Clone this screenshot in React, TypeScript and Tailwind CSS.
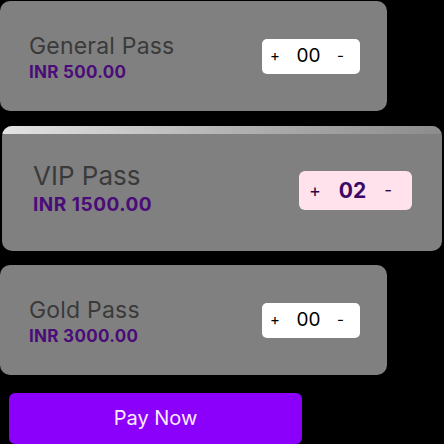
import React from 'react';

type Pass = { name: string; price: string; qty: string };

const passes: Pass[] = [
  { name: 'General Pass', price: 'INR 500.00', qty: '00' },
  { name: 'VIP Pass', price: 'INR 1500.00', qty: '02' },
  { name: 'Gold Pass', price: 'INR 3000.00', qty: '00' },
];

const font = { fontFamily: 'Inter, "Noto Sans", sans-serif' };

// Plain card for passes that are not selected
const PassCard = ({ pass }: { pass: Pass }) => (
  <div className="w-[387px] h-[110px] rounded-[10px] bg-[#808080] flex items-center justify-between pl-[29px] pr-[27px]">
    <div className="flex flex-col pt-[2px]">
      <span className="text-[23px] leading-[26px] tracking-[0.2px] text-[#3a3a3a]">{pass.name}</span>
      <span className="mt-[3px] text-[17px] leading-[20px] tracking-[0.3px] font-bold text-[#4a0c78]">{pass.price}</span>
    </div>
    <div className="w-[98px] h-[35px] rounded-[5px] bg-white flex items-center justify-between pl-[8px] pr-[16px] text-black">
      <span className="text-[15px]">+</span>
      <span className="text-[19px]">{pass.qty}</span>
      <span className="text-[15px]">-</span>
    </div>
  </div>
);

// Selected card, drawn a bit larger with a highlight on top
const ActiveCard = ({ pass }: { pass: Pass }) => (
  <div className="ml-[2px] w-[440px] h-[125px] rounded-[10px] bg-[#808080] overflow-hidden flex flex-col">
    <div className="h-[8px] bg-gradient-to-r from-[#e4e4e4] via-[#b4b4b4] to-[#8c8c8c]" />
    <div className="flex-1 flex items-center justify-between pl-[31px] pr-[30px] pb-[4px]">
      <div className="flex flex-col -mt-[4px]">
        <span className="text-[26px] leading-[30px] text-[#3a3a3a]">{pass.name}</span>
        <span className="mt-[3px] text-[19px] leading-[22px] tracking-[0.5px] font-bold text-[#4a0c78]">{pass.price}</span>
      </div>
      <div className="w-[113px] h-[39px] rounded-[6px] bg-[#ffe2ec] flex items-center justify-between pl-[10px] pr-[20px] text-[#2a0845]">
        <span className="text-[18px]">+</span>
        <span className="text-[21px] font-bold text-[#3b0a66]">{pass.qty}</span>
        <span className="text-[17px]">-</span>
      </div>
    </div>
  </div>
);

export default function App() {
  return (
    <div className="w-[444px] h-[444px] bg-black overflow-hidden flex flex-col pt-px" style={font}>
      <PassCard pass={passes[0]} />
      <div className="mt-[15px]">
        <ActiveCard pass={passes[1]} />
      </div>
      <div className="mt-[14px]">
        <PassCard pass={passes[2]} />
      </div>
      <button className="mt-[18px] ml-[9px] w-[293px] h-[51px] rounded-[6px] bg-[#8a00fa] text-[#fbeaff] text-[20px] flex items-center justify-center pb-[2px]">
        Pay Now
      </button>
    </div>
  );
}
